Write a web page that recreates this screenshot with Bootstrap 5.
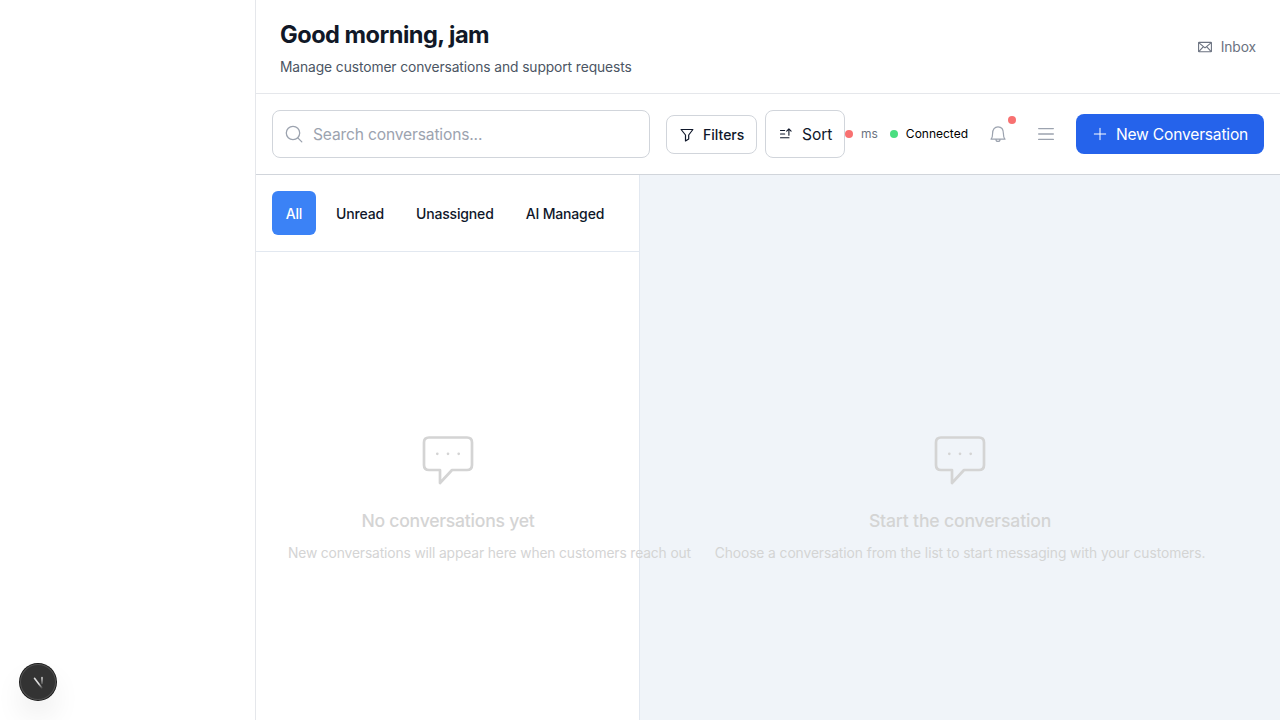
<!DOCTYPE html>
<html lang="en">
<head>
<meta charset="utf-8">
<meta name="viewport" content="width=device-width, initial-scale=1">
<title>Inbox</title>
<link href="https://cdn.jsdelivr.net/npm/bootstrap@5.3.0/dist/css/bootstrap.min.css" rel="stylesheet">
<style>
  body { font-family: Inter, "Liberation Sans", sans-serif; color: #0f172a; background: #fff; }
  svg { display: block; flex: none; fill: none; stroke: currentColor; stroke-linecap: round; stroke-linejoin: round; }
  .side { width: 256px; border-right: 1px solid #e5e7eb; }
  .head { height: 94px; border-bottom: 1px solid #e5e7eb; padding: 0 24px; }
  .title { font-size: 23.6px; line-height: 32px; font-weight: 700; color: #111827; margin: 3px 0 6px; letter-spacing: -.52px; }
  .t14 { font-size: 13.8px; line-height: 20px; letter-spacing: -.09px; }
  .t16 { font-size: 15.6px; line-height: 24px; letter-spacing: -.16px; }
  .t12 { font-size: 12px; line-height: 16px; }
  .t18 { font-size: 17.6px; line-height: 28px; letter-spacing: -.24px; font-weight: 450; }
  .med { font-size: 14px; line-height: 20px; font-weight: 500; letter-spacing: -.16px; }
  .tone-sub { color: #4b5563; }
  .tone-muted { color: #6b7280; }
  .tone-soft { color: #9ca3af; }
  .tools { height: 81px; border-bottom: 1px solid #d1d5db; padding: 0 16px; }
  .search { width: 378px; height: 48px; border: 1px solid #d1d5db; border-radius: 8px; }
  .search input { color: inherit; letter-spacing: inherit; outline: 0; }
  .search input::placeholder { color: #9ca3af; opacity: 1; }
  .tool-btn { border: 1px solid #d1d5db; border-radius: 8px; background: #fff; color: #0f172a; padding: 0 12px; }
  .filters { width: 91px; height: 39px; letter-spacing: 0; padding-top: 1px; }
  .sort { width: 80px; height: 48px; letter-spacing: -.1px; }
  .new-btn { width: 188px; height: 40px; border-radius: 8px; background: #2563eb; color: #fff; letter-spacing: -.19px; }
  .drop { padding-top: 2px; }
  .dot { width: 8px; height: 8px; border-radius: 50%; background: #f87171; }
  .dot-ok { background: #4ade80; }
  .bell { width: 36px; height: 36px; }
  .bell .dot { top: 0; right: 0; }
  .list-pane { width: 384px; border-right: 1px solid #e2e8f0; }
  .chat-pane { background: #f0f4f9; }
  .tabs { height: 77px; border-bottom: 1px solid #e2e8f0; padding: 0 16px; }
  .tabs a { padding-top: 2px; }
  .tab-all { width: 44px; height: 44px; border-radius: 6px; background: #3b82f6; color: #fff; }
  .blank { color: #d4d4d4; }
  .blank .t18 { margin-top: 14px; }
  .chat-pane .t18 { letter-spacing: -.17px; }
  .chat-pane .blank p { letter-spacing: -.075px; }
  .list-pane .blank p { letter-spacing: -.125px; }
  .list-pane .blank { margin-top: 177px; padding-left: 32px; }
  .list-pane .centered { width: 320px; }
  .chat-pane .blank { margin-top: 254px; }
  .dev { left: 20px; top: 664px; width: 36px; height: 36px; border-radius: 50%; background: #333; box-shadow: 0 0 0 1px #171717, inset 0 0 0 1px #505050, 0 16px 32px -8px rgba(0,0,0,.24); }
</style>
</head>
<body>
<div class="d-flex vh-100 overflow-hidden">
  <aside class="side flex-shrink-0"></aside>
  <main class="flex-grow-1 d-flex flex-column">
    <header class="head d-flex align-items-center justify-content-between">
      <div>
        <h1 class="title">Good morning, jam</h1>
        <div class="t14 tone-sub">Manage customer conversations and support requests</div>
      </div>
      <div class="d-flex align-items-center gap-2 t14 tone-muted">
        <svg width="16" height="16" viewBox="0 0 16 16" stroke-width="1.1"><rect x="1.6" y="3.4" width="12.8" height="9.4" rx=".5"/><path d="M2 3.800l6 5 6-5M2 12.400l4.400-4.700M14 12.400L9.600 7.700"/></svg>
        <span>Inbox</span>
      </div>
    </header>

    <div class="tools d-flex align-items-center">
      <div class="search d-flex align-items-center t16 tone-soft flex-shrink-0">
        <svg class="ms-2" width="24" height="24" viewBox="0 0 24 24" stroke-width="1.3"><circle cx="12" cy="11" r="6.700"/><path d="M16.800 15.900l4 4"/></svg>
        <input class="drop border-0 bg-transparent px-0 pb-0 ms-2 flex-grow-1" type="text" placeholder="Search conversations...">
      </div>
      <button class="btn tool-btn filters med d-flex align-items-center gap-2 ms-3 flex-shrink-0">
        <svg width="16" height="16" viewBox="0 0 16 16" stroke-width="1.2"><path d="M2.100 2.500h11.800L9.700 8v3.900l-3.200 2V8z"/></svg>
        Filters
      </button>
      <button class="btn tool-btn sort t16 d-flex align-items-center gap-2 ms-2 flex-shrink-0">
        <svg width="16" height="16" viewBox="0 0 16 16" stroke-width="1.1"><path d="M2.500 4.500h4.200M2.500 8h4.200M2.500 11.700h8.500M10.900 9.300V3M8.700 5.100L10.900 2.900l2.200 2.200"/></svg>
        <span class="drop">Sort</span>
      </button>
      <div class="d-flex align-items-center gap-2 t12 flex-shrink-0">
        <span class="dot"></span><span class="tone-muted">ms</span>
        <span class="dot dot-ok ms-1"></span><span class="text-black">Connected</span>
      </div>
      <div class="d-flex align-items-center tone-soft ms-auto flex-shrink-0">
        <div class="bell position-relative d-flex align-items-center justify-content-center">
          <svg width="20" height="20" viewBox="0 0 20 20" stroke-width="1.200"><path d="M3 15.200h14c-1.300-1.200-1.600-2.700-1.600-5.700 0-4-2-6.700-5.400-6.700S4.600 5.500 4.600 9.500C4.600 12.500 4.300 14 3 15.200zM8 15.400c0 1.300.8 2 2 2s2-.7 2-2"/></svg>
          <span class="dot position-absolute"></span>
        </div>
        <svg class="mx-3" width="28" height="20" viewBox="0 0 28 20" stroke-width="1.400"><path d="M6.700 4.600h14.600M6.700 10h14.600M6.700 15.400h14.600"/></svg>
      </div>
      <button class="btn new-btn border-0 p-0 t16 d-flex align-items-center justify-content-center gap-2 flex-shrink-0">
        <svg width="16" height="16" viewBox="0 0 16 16" stroke-width="1"><path d="M8 2.300v11.400M2.300 8h11.400"/></svg>
        <span class="drop">New Conversation</span>
      </button>
    </div>

    <div class="d-flex flex-grow-1">
      <section class="list-pane flex-shrink-0 position-relative z-1">
        <nav class="tabs d-flex align-items-center med">
          <a class="tab-all d-flex align-items-center justify-content-center text-decoration-none">All</a>
          <a class="text-reset text-decoration-none ps-3 ms-1 pe-3">Unread</a>
          <a class="text-reset text-decoration-none ps-3 pe-3">Unassigned</a>
          <a class="text-reset text-decoration-none ps-3">AI Managed</a>
        </nav>
        <div class="blank text-nowrap">
          <div class="centered d-flex flex-column align-items-center">
            <svg width="64" height="64" viewBox="0 0 64 64" stroke-width="2.700"><path d="M13 8.500h38q5 0 5 5V36q0 5-5 5H36L24 54V41H13q-5 0-5-5V13.500q0-5 5-5z"/><path d="M21.300 24.800v.01M32 24.800v.01M42.700 24.800v.01"/></svg>
            <div class="t18">No conversations yet</div>
          </div>
          <p class="t14 mt-2 mb-0">New conversations will appear here when customers reach out</p>
        </div>
      </section>
      <section class="chat-pane flex-grow-1">
        <div class="blank d-flex flex-column align-items-center">
          <svg width="64" height="64" viewBox="0 0 64 64" stroke-width="2.700"><path d="M13 8.500h38q5 0 5 5V36q0 5-5 5H36L24 54V41H13q-5 0-5-5V13.500q0-5 5-5z"/><path d="M21.300 24.800v.01M32 24.800v.01M42.700 24.800v.01"/></svg>
          <div class="t18">Start the conversation</div>
          <p class="t14 mt-2 mb-0">Choose a conversation from the list to start messaging with your customers.</p>
        </div>
      </section>
    </div>
  </main>
</div>
<div class="dev position-fixed d-flex align-items-center justify-content-center">
  <svg width="20" height="20" viewBox="0 0 20 20" stroke-width="1.600">
    <defs>
      <linearGradient id="fadeA" gradientUnits="userSpaceOnUse" x1="6" y1="6" x2="14" y2="17"><stop offset=".55" stop-color="#ddd"/><stop offset="1" stop-color="#ddd" stop-opacity="0"/></linearGradient>
      <linearGradient id="fadeB" gradientUnits="userSpaceOnUse" x1="14" y1="6" x2="14" y2="14"><stop offset="0" stop-color="#ccc"/><stop offset="1" stop-color="#ccc" stop-opacity="0"/></linearGradient>
    </defs>
    <path d="M6.500 6.300l8 10.500" stroke="url(#fadeA)"/><path d="M14 5.500l.01 6" stroke="url(#fadeB)"/>
  </svg>
</div>
</body>
</html>
